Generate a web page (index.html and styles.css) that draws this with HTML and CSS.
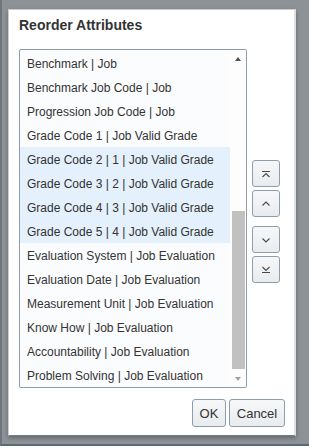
FILE: index.html
```html
<!DOCTYPE html>
<html lang="en">
<head>
    <meta charset="UTF-8">
    <meta name="viewport" content="width=device-width, initial-scale=1.0">
    <title>Reorder Attributes</title>
    <link rel="stylesheet" href="styles.css">
</head>
<body>
    <div class="backdrop">
        <div class="dialog">
            <h1 class="dialog-title">Reorder Attributes</h1>

            <div class="dialog-body">
                <div class="listbox">
                    <ul class="options">
                        <li>Benchmark | Job</li>
                        <li>Benchmark Job Code | Job</li>
                        <li>Progression Job Code | Job</li>
                        <li>Grade Code 1 | Job Valid Grade</li>
                        <li class="selected">Grade Code 2 | 1 | Job Valid Grade</li>
                        <li class="selected">Grade Code 3 | 2 | Job Valid Grade</li>
                        <li class="selected">Grade Code 4 | 3 | Job Valid Grade</li>
                        <li class="selected">Grade Code 5 | 4 | Job Valid Grade</li>
                        <li>Evaluation System | Job Evaluation</li>
                        <li>Evaluation Date | Job Evaluation</li>
                        <li>Measurement Unit | Job Evaluation</li>
                        <li>Know How | Job Evaluation</li>
                        <li>Accountability | Job Evaluation</li>
                        <li>Problem Solving | Job Evaluation</li>
                    </ul>
                    <div class="scrollbar">
                        <div class="scroll-btn"><span class="arrow-up"></span></div>
                        <div class="thumb"></div>
                        <div class="scroll-btn bottom"><span class="arrow-down"></span></div>
                    </div>
                </div>

                <div class="move-buttons">
                    <button class="move-btn" title="Move to top">
                        <svg width="10" height="8" viewBox="0 0 10 8"><path d="M1 1.5H9M1.5 7L5 3.5L8.5 7"/></svg>
                    </button>
                    <button class="move-btn" title="Move up">
                        <svg width="10" height="8" viewBox="0 0 10 8"><path d="M1.5 5.5L5 2L8.5 5.5"/></svg>
                    </button>
                    <button class="move-btn group" title="Move down">
                        <svg width="10" height="8" viewBox="0 0 10 8"><path d="M1.5 2.5L5 6L8.5 2.5"/></svg>
                    </button>
                    <button class="move-btn" title="Move to bottom">
                        <svg width="10" height="8" viewBox="0 0 10 8"><path d="M1.5 1L5 4.5L8.5 1M1 6.5H9"/></svg>
                    </button>
                </div>
            </div>

            <div class="dialog-footer">
                <button class="btn ok">OK</button>
                <button class="btn cancel">Cancel</button>
            </div>
        </div>
    </div>
</body>
</html>
```

FILE: styles.css
```css
body {
    margin: 0;
    padding: 0;
    font-family: "Liberation Sans", Arial, sans-serif;
    color: #333333;
}

.backdrop {
    height: 446px;
    background: #8d9297;
    border-left: 2px solid #6d7680;
    border-bottom: 2px solid #5b6a79;
    padding: 9px 0 0 6px;
    box-sizing: border-box;
}

.dialog {
    width: 288px;
    height: 427px;
    box-sizing: border-box;
    background: #ffffff;
    border: 1px solid #c9ced3;
    border-right: 2px solid #dde1e5;
    border-bottom: 1px solid #6f7e8c;
    box-shadow: 0 2px 4px rgba(0, 0, 0, 0.3);
    padding: 7px 0 0 10px;
    display: flex;
    flex-direction: column;
}

.dialog-title {
    margin: 0;
    font-size: 14px;
    line-height: 16px;
    font-weight: bold;
    color: #333333;
}

.dialog-body {
    display: flex;
    margin-top: 16px;
}

.listbox {
    width: 228px;
    height: 339px;
    box-sizing: border-box;
    border: 1px solid #8c9caa;
    border-radius: 2px;
    background: #fbfcfe;
    display: flex;
    padding-top: 1px;
    overflow: hidden;
}

.options {
    list-style: none;
    margin: 0;
    padding: 0;
    flex: 1;
    font-size: 12px;
}

.options li {
    height: 24px;
    box-sizing: border-box;
    padding: 3px 0 0 7px;
    line-height: 21px;
    white-space: nowrap;
}

.options li.selected {
    background: #e4f0fc;
}

.scrollbar {
    width: 16px;
    display: flex;
    flex-direction: column;
    background: #fdfdfd;
    margin-top: -1px;
}

.scroll-btn {
    height: 17px;
    display: flex;
    align-items: center;
    justify-content: center;
}

.scroll-btn.bottom {
    margin-top: auto;
}

.arrow-up {
    width: 0;
    height: 0;
    border-left: 3.5px solid transparent;
    border-right: 3.5px solid transparent;
    border-bottom: 4px solid #505050;
}

.arrow-down {
    width: 0;
    height: 0;
    border-left: 3.5px solid transparent;
    border-right: 3.5px solid transparent;
    border-top: 4px solid #a3a3a3;
}

.thumb {
    margin: 144px 1px 0 2px;
    height: 158px;
    background: #c1c1c1;
}

.move-buttons {
    display: flex;
    flex-direction: column;
    margin: 111px 0 0 5px;
}

.move-btn {
    width: 28px;
    height: 27px;
    padding: 0;
    margin-bottom: 3px;
    border: 1px solid #8d9dab;
    border-radius: 3px;
    background: linear-gradient(#f6f7f9, #e9ecef);
    display: flex;
    align-items: center;
    justify-content: center;
    cursor: pointer;
}

.move-btn.group {
    margin-top: 6px;
}

.move-btn svg {
    fill: none;
    stroke: #4a4a4a;
    stroke-width: 1.1;
}

.dialog-footer {
    display: flex;
    justify-content: flex-end;
    gap: 3px;
    margin-top: 11px;
    padding-right: 9px;
}

.btn {
    height: 28px;
    border: 1px solid #8d9dab;
    border-radius: 3px;
    background: linear-gradient(#f6f7f9, #e9ecef);
    font-family: "Liberation Sans", Arial, sans-serif;
    font-size: 13px;
    color: #333333;
    padding: 0;
    cursor: pointer;
}

.btn.ok {
    width: 34px;
}

.btn.cancel {
    width: 56px;
}
```
